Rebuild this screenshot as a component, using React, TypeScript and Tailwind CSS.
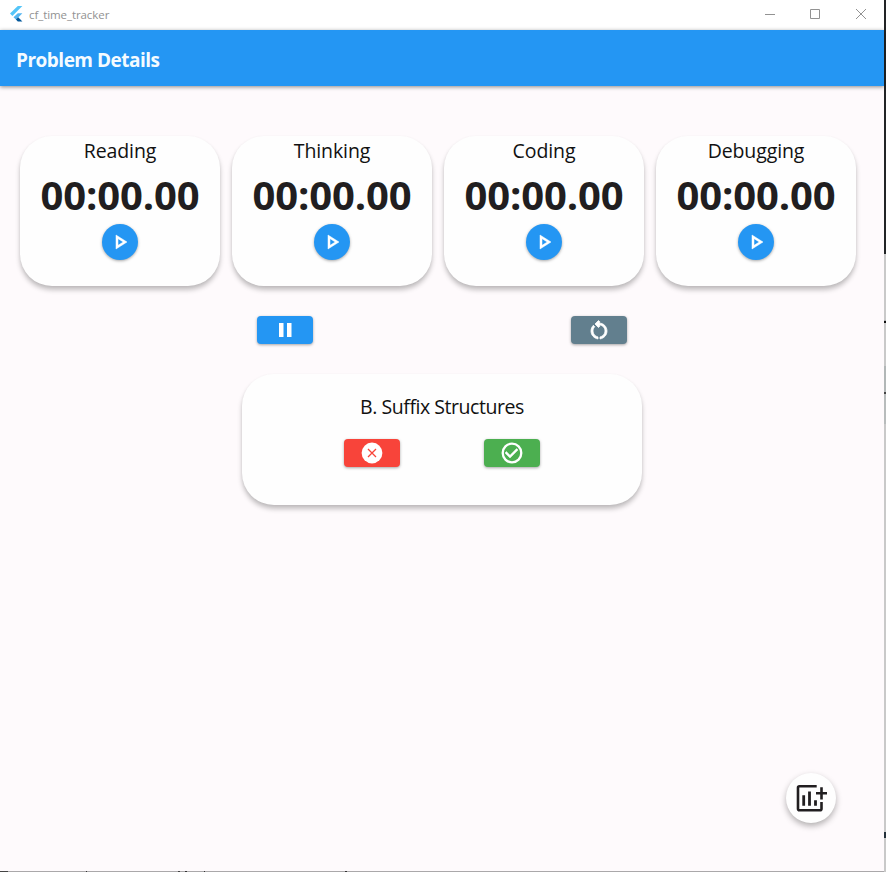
import React from "react";

const phases = ["Reading", "Thinking", "Coding", "Debugging"];

function FlutterLogo() {
  return (
    <svg width="13" height="16" viewBox="0 0 13 16">
      <path d="M7.8 0H12.4L2.4 9.9 0 7.5z" fill="#54c5f8" />
      <path d="M7.8 7.2H12.4L8.2 11.4 5.9 13.6 3.5 11.3z" fill="#54b5f0" />
      <path d="M5.9 13.6L8.2 11.3 12.4 15.6H7.8z" fill="#01579b" />
    </svg>
  );
}

function TitleBar() {
  return (
    <div className="flex h-[30px] shrink-0 items-start bg-white">
      <div className="pt-[6px] pl-[10px]">
        <FlutterLogo />
      </div>
      <span className="mt-[7px] ml-[6px] font-[Open_Sans,sans-serif] text-[11.5px] leading-4 tracking-[-0.08px] text-[#929292]">
        cf_time_tracker
      </span>
      <svg className="mt-[8px] mr-[18px] ml-auto" width="102" height="12" viewBox="0 0 102 12" fill="none" stroke="#929292">
        <path d="M1 6.5h10M46.500 1.500h9v9h-9zM92 1l10 10M102 1L92 11" />
      </svg>
    </div>
  );
}

function TimerCard({ label }: { label: string }) {
  return (
    <div className="flex h-[150px] w-[200px] flex-col items-center rounded-[32px] bg-[#fefefe] shadow-[0_4px_5px_rgba(0,0,0,0.23),0_1px_3px_rgba(0,0,0,0.05)]">
      <div className="mt-[1px] text-[19.500px] leading-[28px] tracking-[-0.1px] text-[#111]">{label}</div>
      <div className="mt-[3px] text-[40px] leading-[54px] font-bold tracking-[-0.1px] text-[#211e20]">00:00.00</div>
      <button className="mt-[2px] flex size-9 items-center justify-center rounded-full bg-[#2496f3] shadow-[0_1px_3px_rgba(0,0,0,0.35)]">
        <svg width="24" height="24" viewBox="0 0 24 24" fill="white">
          <path d="M10 8.640L15.270 12 10 15.360V8.640M8 5v14l11-7L8 5z" stroke="white" strokeWidth="0.5" />
        </svg>
      </button>
    </div>
  );
}

function ActionButton({ color, children }: { color: string; children: React.ReactNode }) {
  return (
    <button className={`flex h-7 w-14 items-center justify-center rounded-[4px] shadow-[0_1px_3px_rgba(0,0,0,0.35)] ${color}`}>
      <svg width="24" height="24" viewBox="0 0 24 24" fill="white">
        {children}
      </svg>
    </button>
  );
}

function ProblemCard() {
  return (
    <div className="mx-auto mt-[30px] h-[131px] w-[400px] rounded-[32px] bg-[#fefefe] pt-[19px] shadow-[0_4px_5px_rgba(0,0,0,0.23),0_1px_3px_rgba(0,0,0,0.05)]">
      <div className="text-center text-[19.500px] leading-[28px] tracking-[-0.45px] text-[#111]">
        B. Suffix Structures
      </div>
      <div className="mt-[18px] flex justify-center gap-[84px]">
        <ActionButton color="bg-[#f8443a]">
          <circle cx="12" cy="12" r="10.4" />
          <path d="M8 8l8 8M16 8l-8 8" stroke="#f8443a" strokeWidth="1.3" />
        </ActionButton>
        <ActionButton color="bg-[#4caf50]">
          <circle cx="12" cy="12" r="9.3" fill="none" stroke="white" strokeWidth="2.3" />
          <path d="M16.590 7.580L10 14.170l-3.590-3.580L5 12l5 5 8-8z" stroke="white" strokeWidth="0.5" />
        </ActionButton>
      </div>
    </div>
  );
}

export default function App() {
  return (
    <div className="flex h-[872px] w-[886px] overflow-hidden font-[Open_Sans,sans-serif]">
      <div className="flex w-[884px] flex-col bg-[#fefafc]">
        <TitleBar />
        <header className="z-10 flex h-14 shrink-0 items-center bg-[#2496f3] pt-[5px] pl-4 text-[19px] font-bold tracking-[-0.5px] text-[#f4fbff] shadow-[0_1px_4px_rgba(0,0,0,0.45)]">
          Problem Details
        </header>
        <main className="flex flex-1 flex-col">
          <div className="mt-[50px] flex gap-3 pl-5">
            {phases.map((phase) => (
              <TimerCard key={phase} label={phase} />
            ))}
          </div>
          <div className="mt-[30px] flex gap-[258px] pl-[257px]">
            <ActionButton color="bg-[#2496f3]">
              <path d="M6 5h4.500v14H6zM14 5h4.500v14H14z" />
            </ActionButton>
            <ActionButton color="bg-[#627f8e]">
              <path d="M6 13c0-1.650.67-3.150 1.760-4.240L6.340 7.340C4.900 8.790 4 10.790 4 13c0 4.080 3.050 7.440 7 7.930v-2.020c-2.830-.48-5-2.940-5-5.910zm14 0c0-4.420-3.580-8-8-8-.06 0-.12.01-.18.01l1.090-1.090L11.500 2.500 8 6l3.500 3.500 1.410-1.410-1.080-1.080c.06 0 .12-.01.17-.01 3.310 0 6 2.690 6 6 0 2.970-2.170 5.430-5 5.910v2.020c3.950-.49 7-3.850 7-7.930z" stroke="white" strokeWidth="0.8" />
            </ActionButton>
          </div>
          <ProblemCard />
          <button className="mt-auto mr-[48px] mb-[48px] flex size-[50px] items-center justify-center self-end rounded-full bg-[#fefefe] shadow-[0_3px_6px_rgba(0,0,0,0.3)]">
            <svg width="32" height="32" viewBox="0 0 32 32" fill="none" stroke="#211e20" strokeWidth="2.6">
              <path d="M21.700 4.300H4.500Q3 4.300 3 5.800V26.700Q3 28.200 4.500 28.200H25Q26.500 28.200 26.500 26.700V20" />
              <path d="M8.700 13.200V23.700M14.500 9.500V23.700M20.500 18.200V23.700" strokeWidth="2.8" />
              <path d="M21 11.200H32.500M26.500 5.200V17.500" />
            </svg>
          </button>
        </main>
        <div className="flex h-px shrink-0 bg-[#aaa8aa]">
          <div className="w-2 bg-[#444]" />
          <div className="ml-[78px] w-px bg-[#333]" />
          <div className="ml-[91px] w-[2px] bg-[#444]" />
          <div className="ml-[5px] w-[2px] bg-[#333]" />
          <div className="ml-[17px] w-px bg-[#333]" />
          <div className="ml-[140px] w-[2px] bg-[#333]" />
        </div>
      </div>
      <div className="flex w-[2px] flex-col bg-[#c9c9c9]">
        <div className="h-[254px] bg-[#222426]" />
        <div className="h-[67px] border-b border-[#aaa] bg-[#c9c9c9]" />
        <div className="h-[2px] bg-[#111]" />
        <div className="h-[43px] bg-[#c9c9c9]" />
        <div className="h-[26px] bg-[#b2b7b7]" />
        <div className="h-[2px] bg-[#444]" />
        <div className="h-[30px] bg-[#b8bcbc]" />
        <div className="mt-[408px] h-[6px] bg-[#24313b]" />
      </div>
    </div>
  );
}
